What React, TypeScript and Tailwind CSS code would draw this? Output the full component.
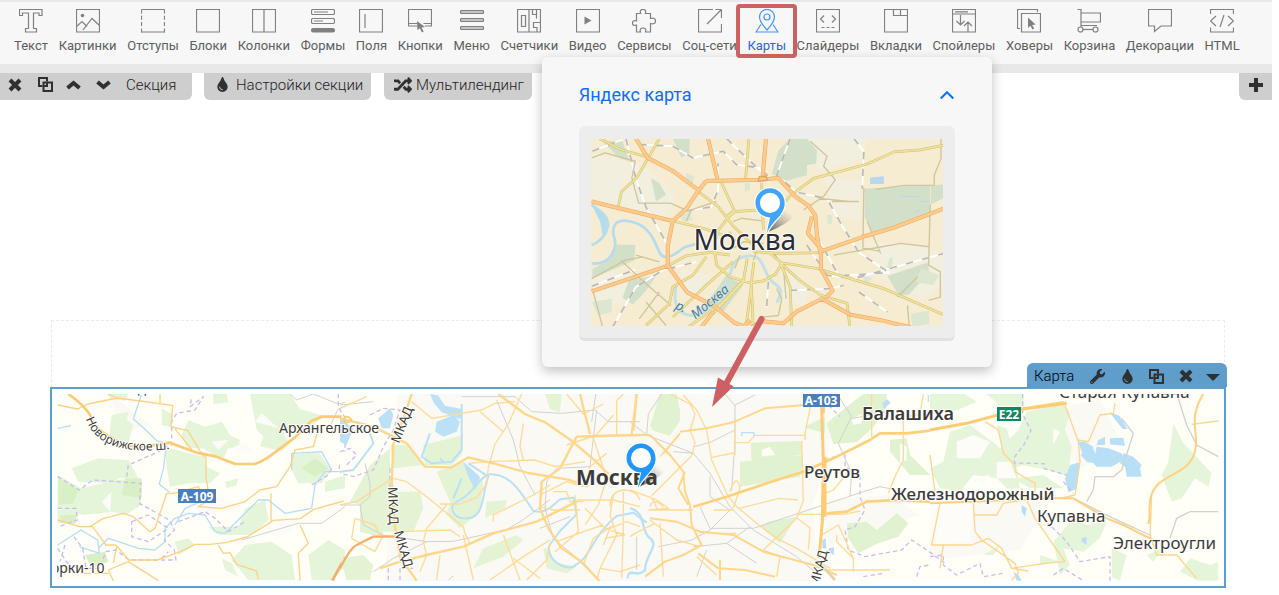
import React from 'react';
import { FaTint, FaRandom, FaWrench } from 'react-icons/fa';

interface Tool {
    label: string;
    icon: React.ReactNode;
}

const dark = { fill: '#808080', stroke: 'none' };

const tools: Tool[] = [
    { label: 'Текст', icon: <path d="M.5.5h22.5v6h-3v-2.5h-5.500v15.500h3v3.500h-11v-3.500h3v-15.500H3.500v2.500h-3z" /> },
    { label: 'Картинки', icon: <><path d="M.5.5h23v22.500H.5z" /><circle cx="6.500" cy="6.500" r="1.800" {...dark} /><path d="M.5 17.500 6 12.500l5 5M7 21l9-11.500 7.500 7" /></> },
    { label: 'Отступы', icon: <><path d="M.5.500h23M.5 23h23" /><path d="M.5.500v23M23.500.500v23" strokeDasharray="4 2.300" /></> },
    { label: 'Блоки', icon: <path d="M.5.5h23v22.500H.5z" /> },
    { label: 'Колонки', icon: <path d="M.5.5h23v22.500H.5zM12 .5v22.500" /> },
    { label: 'Формы', icon: <><rect x=".5" y=".5" width="23" height="5" rx="1.500" /><rect x=".5" y="9.500" width="23" height="5" rx="1.500" /><path d="M3 3h14M3 12h9" /><rect x="0" y="19" width="24" height="4.500" rx="2" {...dark} /></> },
    { label: 'Поля', icon: <path d="M.5.5h23v22.500H.5zM6 5v14" /> },
    { label: 'Кнопки', icon: <><path d="M9 17H.5V.5h23V17H17M.5 14.500H9M15.500 14.500h8" /><path d="m9 12 8 6-3.500.4 2.200 4.200-1.700.9-2.200-4.300-2.400 2z" {...dark} /></> },
    { label: 'Меню', icon: <g fill="#c4c4c4"><rect x=".5" y="1.500" width="23" height="3" rx="1" /><rect x=".5" y="9.500" width="23" height="3" rx="1" /><rect x=".5" y="17.500" width="23" height="3" rx="1" /></g> },
    { label: 'Счетчики', icon: <><path d="M.5.5h23v22.500H.5zM12 .5v22.500M4.500 6.500h4v11h-4z" /><path d="M15.500.5v5h4V.5M19.500 5.500v4M23.500 13.500h-7v5h3.500v4.500" /></> },
    { label: 'Видео', icon: <><path d="M.5.5h23v22.500H.5z" /><path d="M8.500 7.500v8l7-4z" {...dark} /></> },
    { label: 'Сервисы', icon: <path d="M4.500 4.500h4.200C7.500 1.500 9 .5 11 .5s3.500 1 2.300 4h5.200v5c3-1 5 0 5 2.500s-2 3.500-5 2.500V23h-5c1-3-.5-4-2.500-4s-3.500 1-2.500 4h-4v-7c-3 1-4 0-4-2 0-1.500 1-3 4-2z" /> },
    { label: 'Соц-сети', icon: <path d="M15 .5H.5V23h23V15M23.500 9V.500M9 15 23.500.5M17.500.5h6" /> },
    { label: 'Карты', icon: <><path d="M12 21C7.500 16 4.500 12 4.500 8a7.500 7.500 0 0 1 15 0c0 4-3 8-7.500 13z" /><circle cx="12" cy="8" r="3" /><path d="M6 15.500 1 23h22l-5-7.500" /></> },
    { label: 'Слайдеры', icon: <><path d="M.5.5h23v22.500H.5z" /><path d="M8 6.500 4.500 10 8 13.500M16 6.500l3.500 3.500L16 13.500" /><path d="M5.500 18.500h13" strokeDasharray="3 2" /></> },
    { label: 'Вкладки', icon: <path d="M.5.5h23v22.500H.5zM9.500.5v6h14M16.500.5v6" /> },
    { label: 'Спойлеры', icon: <path d="M.5.5h23v22.500H.5zM.5 5h23M3 2.800h13M8.500 6v10M4.500 12l4 4 4-4M16 22.500V13M12 17l4-4 4 4" /> },
    { label: 'Ховеры', icon: <><path d="M3 19.500H.5V.5h20V3M4.500 4.500h19V23h-19z" /><path d="M11 8.500v10.500l2.400-2.200 2 3.700 1.800-.900-2-3.700 3.400-.400z" {...dark} /></> },
    { label: 'Корзина', icon: <><path d="M.5.5H4V18M4 4h19.500v9H4M4 16.500h16" /><path d="M6 20.500h11" /><circle cx="3.500" cy="20.500" r="2.500" fill="#f7f7f7" /><circle cx="18.500" cy="20.500" r="2.500" fill="#f7f7f7" /></> },
    { label: 'Декорации', icon: <path d="M.5.5h23v16.500H13L6.500 22.500V17H.5z" /> },
    { label: 'HTML', icon: <path d="M.5 5V.5h23V5M.5 18.500V23h23v-4.500M6 7l-5.500 5L6 17M18 7l5.500 5-5.500 5M14 6l-4 12" /> },
];

const CloseIcon = () => (
    <svg width="14" height="14" viewBox="0 0 14 14" stroke="#303030" strokeWidth="4" fill="none">
        <path d="m2 2 10 10M12 2 2 12" />
    </svg>
);

const CloneIcon = () => (
    <svg width="15" height="15" viewBox="0 0 15 15" stroke="#303030" strokeWidth="2" fill="none">
        <path d="M4.500 9H1V1h8v3.500" />
        <path d="M5.500 5.500H14V14H5.500z" />
        <path d="M9 5v4H5" />
    </svg>
);

const ChevronIcon = ({ down = false }: { down?: boolean }) => (
    <svg width="15" height="10" viewBox="0 0 15 10" stroke="#303030" strokeWidth="4" fill="none">
        <path d={down ? 'm1.500 2 6 5 6-5' : 'm1.500 8 6-5 6 5'} />
    </svg>
);

const Marker = ({ x, y, color }: { x: number; y: number; color: string }) => (
    <g transform={`translate(${x} ${y})`}>
        <path d="M-2 29 12 8q9-2 13 4Q16 22-2 29z" fill="url(#pinShade)" />
        <path d="M14.500 1C14 13 3 17-3 30-2 22 0 17 .5 12z" fill={color} stroke="#fff" strokeWidth="2" />
        <circle r="15.500" fill="#fff" />
        <circle r="12" fill="#fff" stroke={color} strokeWidth="5" />
        <path d="M14.400 1C14 13 3 17-3 30-2 22 0 17 .5 12z" fill={color} />
        <circle r="10" fill="#fff" />
    </g>
);

const PinShade = () => (
    <defs>
        <linearGradient id="pinShade" x1="0" y1="1" x2="1" y2="0">
            <stop offset="0" stopColor="#222" stopOpacity=".7" />
            <stop offset=".85" stopColor="#555" stopOpacity="0" />
        </linearGradient>
    </defs>
);

const CityMap = () => {
    const main = 'M290 252 325 310 402 350 475 405M158 440 240 460 400 498M158 708 385 632M505 252l28 120M678 252l-10 115M500 378h40l120-3 55-5 50 55 40 28 20 28 5 60 12 60 0 40 35 65-20 20M500 378l-25 32-35 52-40 36-15 75 0 58 58 80 80 40 60 50 35 14M845 588l120-42 95-28 148-57M845 730l-75 38-40 35-65-6-30 18M845 730l85 48 90 16 90 22M815 485l-12 50 42 50M520 770l-35 45M610 815l20-22';
    const minor = 'M182 252l60 32 85 24M360 252l-33 58-35 60-45 40-10 48M627 252l-10 122M1208 272l-70 14-78 6-80 36-90 25-70 18-70 52-55 60M475 410l60 45 45 58 62 60M545 385l40 85-22 20-30 40-10 50 8 50 40 35 60 18 40-6 35-20 18-30M665 385l5 140M400 498l90 22 60 20M385 632l55-30 70-10 60 8M400 785l100-95 80-70M320 810l70-65 10-50 60-35 40-55M520 775l90-95 12-70M640 815l-6-130 8-65M755 815l-5-120-30-75-35-30M720 622l110 18 100 30 100 30 178 78M720 622l60 55 60 42 80 25 8 70M560 485l20-15 80-5M605 680l-60 65-100 70M640 590l80 5 120-2M635 690l-15 110 20 8';
    const rail = 'M160 290l90-35M260 252l30 120 30 85 60 105M300 270l100 5 60 35 90-20 40 40 70 10 30 30M560 252l110 105M750 252l-40 110 60 50 90 20 45 80 50 80 90 60-150 10-60-110M940 252l30 40-5 110M158 693l130-50M220 815l70-120 80-50 100-25M750 705l120-5 40-10M800 570l60 90 80 10 268-75M955 710l85 60M685 680l-5 75M440 468l75-12 20-50 0-80';
    return (
        <svg className="block h-[187px] w-full" viewBox="592 139 350 187" preserveAspectRatio="xMidYMid slice" role="img" aria-label="Карта Москвы">
            <PinShade />
            <rect x="592" y="139" width="350" height="187" fill="#f5ecd2" />
            <g transform="translate(540 55) scale(.33333)" fill="none" strokeLinejoin="round">
                <g fill="#f3efdf">
                    <path d="M158 300l60 10 110 30 80 90-30 60-120-30-100-30zM780 252h200l-20 60-120 40zM975 560l180 10 50 30v90l-60 40-120-60zM158 640l120 20-10 80-110 20zM420 640l90 20-60 90zM850 360l110 20v120l-80-20zM720 640l90 50-20 60-60-10z" />
                </g>
                <g fill="#d3e0c9">
                    <path d="M750 252h50l30 35-2 40-28 5v30l-60 16-45-20 20-70zM972 402l196-12v95l-170 52-25-50zM1170 392l38-3v40l-38 20zM230 568l58 2-2 45-126 55v-28l50-30zM1160 622l5 30-60 65-30 5-35-60zM400 252h50v45l-25 12zM335 370l25 15 20 35-30 20zM270 672l80-10-30 45-40 40-30-20zM190 260l60 0 20 60-30-10zM560 660l50 30-60 80-60-10z" />
                    <path d="M440 355l25 10-5 20-20-5zM615 385l15 0v20l-15 5zM420 480l30-10 10 25-30 5zM158 740l60-10 0 40-40 10zM860 480l15 0v25l-12 5zM1045 610l12-5-3 30-15 5zM965 655l30 15-20 20zM1110 775l55-10 0 40-50 10zM1140 640l55 20-20 30-50-10z" fill="#dce7d1" />
                </g>
                <path d="M158 450c30 20 60 40 45 75-5 20-30 40-45 45M158 625c60 5 80-50 65-85-5-40 20-50 60-38 45 12 60 50 75 85 10 30 40 20 75-10l35-10" stroke="#b4dcec" strokeWidth="8" />
                <path d="M410 690c-10 50 0 85 45 90 60 0 100-70 115-120 10-40 20-55 60-58 45-2 40 60 70 80 25 20 30 20 10 60" stroke="#c4e0e6" strokeWidth="9" />
                <path d="M158 450l40 35 8 40-15 15-8-40z" fill="#b4dcec" />
                <path d="M990 370l38-4 0 20-38 0zM1080 425h52M1120 470l20-3M1137 440h20" fill="#b5d9e8" stroke="#c4d2ee" strokeWidth="3" />
                <path d={rail} stroke="#fff" strokeWidth="5" />
                <path d={rail} stroke="#b9b8b4" strokeWidth="5" strokeDasharray="22 28" />
                <g stroke="#cfc69c" strokeWidth="4">
                    <path d="M158 310l40-15 90 25-10 50 20 75 95 0 45 20M810 260l50 45-10 30 35 40-35 50-60 40M1200 252v60l-20 50v30h-90l-85 12M970 400l-3 180 50 8M1168 450l-5 180M955 440l-80 0M158 670l100-55 55-10M245 615l80 75 70 60M320 740l60 70M300 790l60-80M160 700l30 112M880 600l200-35 85 10M1163 630l35 20v75l-35 10M1070 725l60-60M835 430l90 10M980 500l40 95M440 500l15-35 75-25M1000 580l80-15M360 620l-70-20M580 500l25-10 60 8M700 590l30 50 8 90M710 700l15 30-10 50-45 5M1100 750l5 60" />
                </g>
                <path d={minor} stroke="#cdbd7c" strokeWidth="8" />
                <path d={minor} stroke="#f2e294" strokeWidth="5" />
                <path d={main} stroke="#e6a862" strokeWidth="12" />
                <path d={main} stroke="#ffc98a" strokeWidth="9" />
                <path d="M580 580l30-20 60 5M590 560l-20-30M650 590l-10 25M600 600l-15 40" stroke="#d9c67a" strokeWidth="4" />
                <path d="M655 380l3-14 20-2 5 12z" stroke="#e6a55c" strokeWidth="4" />
            </g>
            <g fontFamily="'Noto Sans', sans-serif" paintOrder="stroke" strokeLinejoin="round">
                <text x="694" y="250" fontSize="28" fill="#2a2c36" stroke="#fff" strokeWidth="2">Москва</text>
                <g fontSize="13" fontStyle="italic" fill="#4a7d9c" stroke="#dbe8e4" strokeWidth="1">
                    <text transform="translate(675 308) rotate(25)">р.</text>
                    <text transform="translate(696 319) rotate(-40)">Москва</text>
                </g>
            </g>
            <Marker x={770} y={203} color="#3fa4fb" />
        </svg>
    );
};

const RegionMap = () => (
    <svg className="block h-[187px] w-full" viewBox="57 394 1162 187" preserveAspectRatio="xMidYMid slice" role="img" aria-label="Карта Москвы и области">
        <PinShade />
        <rect x="57" y="394" width="1162" height="187" fill="#fffff8" />
        <path d="M398 394h420l15 40-20 70 5 77H385l6-100zM110 394l40 30-30 10zM820 500l70-5 30 20-90 30zM930 500l120 0-30 50-90 10zM1040 410l60-10 20 40-40 30z" fill="#fbf9f4" />

        {/* west */}
        <g transform="translate(45 315) scale(.33333)" fill="none" strokeLinejoin="round">
            <g fill="#e5f5da">
                <path d="M505 237h40l5 25-45 5zM615 237h120l30 45 75 22-35 25-90 30 20 25-25 25-65-15 10-30-20-20zM200 300l50-10-5 25 20 15-20 75-50-20 0-40zM430 315l50 20 50-15 25 40 30 15-5 25-30 0-15 30-30-10-30-20-50 0-15-40zM350 280l35 20-10 35-25-5zM360 395l70 20 50 10 5 30 40 20-30 30-60 0-60 10-10-60zM160 430l90 5 30 55-60 0-15 15-105-5-20-40zM38 480l70 40 110-25 70-5 0 80-45 30-40-10-90 10-75-20zM38 585l60-5-5 45-55 0zM740 420l80-10 40 55-30 40-70 0-20-40zM600 580l60-25 10 60-50 45-100 0-30-25 90 0zM600 690l80-10 60 40 10 75h-140l-50-60zM790 720l60-45 50 30v50l-40 40h-60zM840 500l60-20v40l-60 10zM540 500l40-10-5 20-30 10zM390 680l40-10 20 20-50 30zM190 237h60l-10 20-45-5zM530 730l30 15 20 40-40-20z" />
            </g>
            <path d="M40 490l60 35-15 40-45 5zM240 490l50 0 0 60-60-10zM770 460l40-30 40 30-40 25zM120 720l60-10 10 30-50 20zM45 600l50 0-5 25-40 0z" fill="#d9efc6" />
            <path d="M500 380l50-5-30 30zM170 560l30-30-5 60zM560 400l40-20 30 30-50 0zM660 640l50-30 40 30-30 20zM215 660l-60-30 0 40zM700 340l-70-20 20-25zM420 560l100-15 60 25-30 20-80 5z" fill="#fcfbf7" />
            <path d="M290 237l-25 75 40 35 30 30 30 10-10 75-12 45 30 25M38 340l40-8M900 470l-60 0-30 40-10 70-80 15-50-40-30 0-60 60-40 40-30-5-30-50-50-5-40 15-30 30v40l-30 25-50-5-60-20-30-10-30 30M38 690l70-45 50 30 5 40-60-20M740 465l0-50 90-5 30 55M390 630l30-50 60-25" stroke="#b5dff5" strokeWidth="4" />
            <path d="M38 485l65 40 40-30 145 10-5 60 90 50 15 30-30 30 30 30 5 30-140 0-40-30-30 5-20 50-40 0-10-60-30-40M38 580h55l5 35-55 20M245 485l5-35 80-35 50-25v-70l15-25 55-10 25-40-40 30 5-30M260 620l50-20 60 40-60 40-50-15zM800 510l50-30 10-20M880 237v40l20 30v100l-20 60M38 700l40 60M60 690l-15 50M400 620l80-30 30 20 40 40 50-30M350 730l20-20" stroke="#c9bdf0" strokeWidth="4" strokeDasharray="13 9" />
            <path d="M735 237l20 18 50-18M805 237l75 30 20-5M590 675l170-50h70l70-50M880 280l-25 55" stroke="#d3d3d3" strokeWidth="3" />
            <g stroke="#ffd184" strokeWidth="4">
                <path d="M38 270l60 12 30-15 90-18 165 22-5 65 50 10 45 75 10 5 0 60 8 50-15 10M345 237v30M218 249l-30-12M38 615l65 20h40l40 55h30l38 45h85l70-25 45-22h45l50-6 60-16 80-50 80-5 40-28 90-25M135 635l40-25 60-15 30 10 50 45 15-10 35-105h20l75-20 25 45-25 15 70 5 70-20 45-35 50-10 40-60 15-50 55-10 15-55M215 695l-10 50M520 690l15 25 20-2 20 35 60 20 5 27M190 765l15 32M190 765l60-25 90 57M765 630l25 55-30 30 5 82M678 535v90M105 775h85M385 335l60 75" />
            </g>
            <path d="M70 237q70 50 75 90 60 60 140 70l90-14 80 30 60 12 55 22h60q30-10 60-35l60-45 50-50 30-12h60" stroke="#ffcb72" strokeWidth="8" />
            <path d="M862 797l38-70" stroke="#f8ac68" strokeWidth="8" />
        </g>

        {/* centre */}
        <g transform="translate(340 385) scale(.33333)" fill="none" strokeLinejoin="round">
            <g fill="#e3f3d4">
                <path d="M150 180l50 0 50 60-90 10zM90 240l60-50v90l20 40 70 0 10 50-30 70-90 0 0 20-70-20 0-80-30-10zM250 180l120-30-5 60-30 30-80 0zM290 260l80-30 60 60-10 90-60 50-40-40 10-40zM440 350l60-5-5 25-60 30zM0 520l70-10 30 30-10 45h-70zM615 27l50 0-5 55-30-10zM400 550l30-60 100-40 20 15-60 50zM610 490l20 0 10 40 70 15-30 20-60-15z" />
            </g>
            <path d="M20 200l40-50 50 0 20 30-60 70-30 20-40-10v-60z" fill="#fffff8" />
            <path d="M270 27l25 5 20 30 50 10v20l-5 10-55-20-25-30zM290 110l50-20 20 20-10 30-40 15-25-15zM370 230l50 45-15 40-20-40zM115 100l35-30 10 20-10 40-25 0zM0 100l40 30-20 50-20-10z" fill="#bce1f7" />
            <path d="M270 145l-25 70 30 20 60-5 30-35V57M385 235l60 40c-20 50-10 120-60 125-50 5-60-40-35-50 50-20 70-80 100-82 60-2 90 50 130 110 40 10 60-20 80-35l40-5 10 50-50 50-30 40c-20 40 50 90 80 60 40-20 50-90 120-145l50-10 40 30M0 260l40-5 60-80-10-30M340 340l25-60M300 220l10 10M862 580l5-15 30 0" stroke="#b9e1f5" strokeWidth="6" />
            <path d="M90 90l40-20 50 5-20 60-30 50-30 70-60 20-40-10M150 250v60M0 200l30-10 20 20-30 30M145 585v-35M180 585v-35h40" stroke="#cbbfef" strokeWidth="4" strokeDasharray="13 9" />
            <path d="M0 60l100-10M365 35h160l50 45 90 5 100-10 40 35h95M470 45l50 120 20 80 45 85M770 75l-20 170-100 5-30 40-5 80 25 90 60 50 60 60M75 235l15 60 0 40-30 25 10 60 60 30 130 20 80-1 160-35 50-30 80-60M0 360h60M100 560l60-40 100-50M600 430l90-35M325 585l15-12M755 110l15-100" stroke="#d1d1d1" strokeWidth="3" />
            <g stroke="#ffda96" strokeWidth="4">
                <path d="M215 50l60 50 150-25 40-20 60-5M0 70l80-35M420 80l70 60M545 27l-40 90-40 60-20 70-5 50-30 40-50 20-60 0M550 115l-10 70 10 40M385 235l60-5 140-5 60 20 90-15M180 440l150-5 30 20M370 450l30 135M320 360l-60 70-10 40 10 40-20 50M45 400l-10 60 70 40 20-40-20-40zM300 510l-10 75M0 360l50-10 60-40 50-30 40 10 60 45 110 90 5 20 15 30M460 410v-20l120-60 50-30M490 450l50 135M450 585l100-70 80-50M640 320l40 0 10 30 40 0M600 330l80-40 50 15 20-60 50-40M710 345h110l80 20M680 180l90-30M820 90l-60 70 20 60 20 60-25 80-40 60M720 375l-80 0-40-10M735 370l60 60 60 20M705 330l10 110-70 60M820 330l-10 60 20 60-50 100-10 35M790 480l20-50 50-20 40 15M850 320v110l-5 150M850 27l-20 20v105M680 27l50 60 60-30M650 470l80-30 60-20M520 520l80 60" />
                <path d="M810 365q0-45 40-50 40 0 50 30M850 450l-55 10M730 540l30-80 60-40M780 550l60 10 60-20M560 585l60-60 10-50" />
            </g>
            <g stroke="#ffd68a" strokeWidth="7">
                <path d="M215 27l-20 60-35 90-5 120 10 130 15 90 50 70M0 100l100 25 100 50 55 70 80 2 50-30 90 22 90 25 120 20 60 20M475 27l80 60 60 25 80 55 70 60 40 40M660 250l50-95 60-2 130-3M660 250l-55 40-5 80 25 60 40 60 60 40 55 60M720 27l30 120M890 27l-10 110M120 550l60-20 80-20 110-25 90-40 130-35 60-30 60-30" />
            </g>
            <path d="M0 550q30-60 50-70l50-25h70" stroke="#f8ae6c" strokeWidth="7" />
            <path d="M10 105q10-20 25 0-15 15-25 0" stroke="#ffcb72" strokeWidth="5" />
        </g>

        {/* east of the centre */}
        <g transform="translate(630 310) scale(.33333)" fill="none" strokeLinejoin="round">
            <g fill="#e0f2cf">
                <path d="M90 252h50l10 50 0 30-30 45-50-15-10-15zM362 398l153-5 0 40-80 15 0 20-70-5zM330 455l190-20-10 65-180 30zM500 620l-50 80-60-50 25-15zM525 350l60-30 0 50-55-15zM590 340l60-50 50-38h70v40l-40 60-50 45-70 5zM780 390l50-5 10 50 60 60h-60l-60-70zM650 640l60-5 30 25 60-50 35 30-30 40-60 20-60 30-30-45zM880 310l20-10v30z" />
            </g>
            <path d="M395 420l25-10 15 25-40 5zM460 500l20 10-30 10zM665 330l30-20 0 30-25 5zM810 400l20 10v40l-20 10z" fill="#fdfdf8" />
            <path d="M757 280l15-12 10 10-20 18zM577 690l10-5 2 30-12 0zM597 715l15-3 0 22-18-5z" fill="#b9dff5" />
            <path d="M335 378v-10h37v10M895 255v20" stroke="#b9dff5" strokeWidth="4" />
            <path d="M0 595c50 10 30 70 60 90 30 20-15 50-15 95-15 20-35 5-45 8" stroke="#b9e1f5" strokeWidth="7" />
            <path d="M620 270l-20 20 30 30M585 450l60-20 0 40 45 30 0 60 15 40-30 50-30 10 10 60 50 20 110-20 30-30 60 40 40 30M700 800l60-10M860 800l10-30 30-5" stroke="#cbbfef" strokeWidth="4" strokeDasharray="13 9" />
            <path d="M95 252l-40 60-5 60M0 335l50 40 140 55 50 60 60 100 70 70 130 80 60 50M285 252l30 35 0 105-10 150M315 285l60-30M195 410l50-15 70-35M130 425l60 5M240 500l0 60 60 40-60 60-55 30-100 20M210 590l30 65 130 0 330-110 50-15 50 10M190 710l100-10 90 60M290 700l70-50M620 250l45 70-40 80 40 90-5 70M670 325l100-20M20 680l0 100M200 800l30-80" stroke="#d1d1d1" strokeWidth="3" />
            <g stroke="#ffda96" strokeWidth="4">
                <path d="M120 252l60 30 15 30-15 50 15 35-10 40M160 255l40 45 30 60 15 90 50 110 25 30 60 50 60 45 60 30 100 60M540 275v20l-15 75 0 20M310 398h45l20-22h150M315 325l0 110M245 442l65-13M515 393l5 180-20 50 40 30-5 65M328 595l120-30 55 5M500 613h140l50-10M585 550l25-10 50-60M725 252l0 130M820 320l0 130-25 50-20 50M575 675l50-30 45 100v40M450 740l-10 60M150 370l-60 70M0 540l80 30 35 25-60 5M60 600l130 0M90 640l10 160M185 437l-120 120M60 630l80 60 70 20M75 640l-60 30-15 10M450 740l-50-20 100-95M250 600l60 0M300 545q20-60 30-10l-20 60M200 740l60 55M580 780h140l60 0M620 675l0 20 50 50M880 252l-10 60-50 10M60 560q20 20 20 40M100 590q-30-30-40 0M260 670l60 0" />
            </g>
            <path d="M20 252l-15 120M0 375h60l60 60 40 50 5 60 15 40 5 60 30 60-55 30-55 20-60 45M60 625l80 10 70 30 100 10 90 50 150 40 70 30M205 730l60 45 80 5 90 20M165 485l-20 50 30 50M150 365l80-10 85-20 90-40 120-10M100 430l50-60M270 750v60" stroke="#ffd68a" strokeWidth="6" />
            <path d="M190 590l100-30 120-40 110-35 90-40 110-55 30-20h80l70-8M590 610l60-5 60-30 90-5 100 5" stroke="#ffd07c" strokeWidth="8" />
            <path d="M575 290l5 165-3 180-10 110M580 260v50M585 440v180" stroke="#ffcb72" strokeWidth="9" />
            <path d="M570 760l45 50" stroke="#e3d5ac" strokeWidth="8" />
        </g>

        {/* east */}
        <g transform="translate(930 355) scale(.33333)" fill="none" strokeLinejoin="round">
            <g fill="#e5f5da">
                <path d="M0 115h100l40 25-70 30-70 5zM170 117h110v35h-70zM290 170l110-25 20 30-15 50 20 50-10 90-60-20-80-15-30 15-40-60 60-60zM200 210l30 10 15 50-30 10zM60 230l60-20 80 60 60 60 10 70-40 0-30-30-70-10-40 50-60-10-30-60 40-20zM730 205l30 60 30 30 55 60-10 40-40-25-40 60-30 10-30-80 20-40zM370 560l60-70 40 20 60-10-20 50-50 40-60-10 20 50-30 30zM250 370l90-10 60 40-100 0zM750 650l30-40 60 20 25-10v57h-60zM545 580l45 20-20 77-25-10zM330 600l60 20-60 10zM160 600l50-30-20 30zM650 600l50-20-30 40z" />
            </g>
            <path d="M80 260l50-20 50 20-30 50-70 0zM200 320l40 0 20 50-60 0zM370 220l20 10-20 40zM0 440h130l-10 120-120 10zM120 370l60-10-20 40z" fill="#fdfcf8" />
            <g fill="#b9dff6">
                <path d="M445 260l20 0 25 15-15 30-20-15zM500 275l35 5 40 15 5 20-35 20-45 0-10-10zM455 295l35-15 8 25v20l-25-3-20-20zM505 255l20-10v25h-25zM540 250l40-2 5 25-45-5zM580 295l30 10 25 25-5 10 5 25-45 0-5-30-15-10zM420 330l30-8-10 80-25 10-10-40zM538 172l30 10 25 40-15 0zM275 450l15 10-5 25-10-15zM455 550l15-5 0 25-15-10zM250 650l15 10 10 17-15 0z" />
            </g>
            <path d="M278 117v60l25 50-20 40-30 40 0 17 90 2 0 15 70 20M400 380l30 35M0 605l40-5 0 30 40 30 70-35 10 40 60-10M350 500l60 60 40 60 90-15 0 72M370 660l30-20 60 37" stroke="#cbbfef" strokeWidth="4" strokeDasharray="13 9" />
            <path d="M575 190l35 45-35 110-25 20-55 0-5 40-20 35M430 430l120 60 110 50M745 130l25 80 30 60 65 35M720 550l20-60 40-20h85" stroke="#d1d1d1" strokeWidth="4" />
            <g stroke="#ffd58e" strokeWidth="4">
                <path d="M165 200l40 25 15 70 35 35 0 20 60 35 0 30M0 300l15 110M270 160l130-20M405 150l40 110 5 60-15 100-45 10M445 255l30 5 35-80 40-5 5-30M665 425l-5 115 20 60 60 0 60 70M785 208l80-10M130 440l5 90 20 25 100 70 10 30-20 20M130 480h70l20-35 60-10M30 445l-25 125 120 0 50-20 40 30 30 60 100-15 60-5-90-130-40-90M40 570l-10 70M245 640l50 8" />
            </g>
            <path d="M820 117c-50 80-10 120-25 170-10 60-80 70-110 100-40 40-20 90-30 120M0 445l380-15h50l100 60 50 20 100 50" stroke="#ffd083" strokeWidth="6" />
            <path d="M0 225l110-20 150-40 150-20" stroke="#ffcb72" strokeWidth="9" />
        </g>

        <g fontFamily="'Noto Sans', sans-serif" paintOrder="stroke" stroke="#fffef9" strokeWidth="2" strokeLinejoin="round" fill="#3c3c3c">
            <path id="roadPath" d="M86 419C92 436 108 456 170 449" fill="none" stroke="none" />
            <text fontSize="12"><textPath href="#roadPath">Новорижское ш.</textPath></text>
            <text x="279" y="433" fontSize="14">Архангельское</text>
            <text x="51" y="573" fontSize="14">орки-10</text>
            <text x="138" y="394" fontSize="13">д</text>
            <text fontSize="13" transform="translate(399 444) rotate(-68)">МКАД</text>
            <text fontSize="13" transform="translate(388 487) rotate(88)">МКАД</text>
            <text fontSize="13" transform="translate(394 532) rotate(74)">МКАД</text>
            <text fontSize="13" transform="translate(818 588) rotate(-75)">МКАД</text>
            <text x="576" y="485" fontSize="21" fontWeight="700">Москва</text>
            <text x="862" y="420" fontSize="18" fontWeight="600">Балашиха</text>
            <text x="804" y="478" fontSize="17" fontWeight="500">Реутов</text>
            <text x="891" y="500" fontSize="17" fontWeight="500">Железнодорожный</text>
            <text x="1037" y="522" fontSize="17">Купавна</text>
            <text x="1113" y="549" fontSize="17">Электроугли</text>
            <text x="1059" y="398" fontSize="17">Старая Купавна</text>
        </g>
        <g fontFamily="'Noto Sans', sans-serif" fontWeight="700" fontSize="12" fill="#fff" textAnchor="middle">
            <rect x="178" y="489" width="38" height="14" fill="#4c7fc0" />
            <text x="197" y="501">A-109</text>
            <rect x="803" y="394" width="37" height="13" fill="#4c7fc0" />
            <text x="821" y="405">A-103</text>
            <rect x="997" y="407" width="24" height="14" fill="#0a8a63" />
            <text x="1009" y="419">E22</text>
        </g>
        <Marker x={641} y={458} color="#1e98ff" />
    </svg>
);

const MapsMenu = () => (
    <div className="absolute top-[55px] left-1/2 h-[310px] w-[450px] -translate-x-1/2 rounded-md bg-[#f7f7f7] px-[37px] pt-7 text-left shadow-[0_4px_12px_rgba(0,0,0,0.25)]">
        <button type="button" className="flex w-full items-center justify-between pr-px text-[18px] leading-5 text-[#0d6efd]">
            Яндекс карта
            <svg width="14" height="9" viewBox="0 0 14 9" fill="none" stroke="#0d6efd" strokeWidth="2">
                <path d="m.7 7.500 6.300-6.300 6.300 6.300" />
            </svg>
        </button>
        <div className="mt-[21px] rounded-md border-b-3 border-[#e1e1e1] bg-[#ededed] p-3 pt-[13px]">
            <CityMap />
        </div>
        {/* hint arrow from the block to the page */}
        <svg className="pointer-events-none absolute top-[256px] left-[165px]" width="62" height="96" viewBox="708 313 62 96">
            <path d="M762.500 319 727 384" stroke="#cd6062" strokeWidth="6" strokeLinecap="round" />
            <path d="m719 377.500 15.600 8.800L713 407z" fill="#cd6062" />
        </svg>
    </div>
);

const App: React.FC = () => {
    return (
        <div className="bg-white pr-[7px] font-['Roboto',sans-serif]">
            <header className="relative z-10 border-b-9 border-[#e8e8e8] bg-[#f7f7f7]">
                <nav className="flex h-16 items-start justify-between border-t-2 border-[#e9e9e9] pt-[7px] pr-8 pl-[14px]">
                    {tools.map((tool) => {
                        const active = tool.label === 'Карты';
                        return (
                            <div key={tool.label} className={active ? 'relative -mt-[7px] pt-[7px]' : ''}>
                                {active && <MapsMenu />}
                                <button type="button" className={`flex flex-col items-center text-[13px] leading-4 whitespace-nowrap ${active ? 'text-[#2468e5]' : 'text-[#5e5e5e]'}`}>
                                    <svg className="mb-[5px] block" width="24" height="24" viewBox="0 0 24 24" fill="none" stroke={active ? '#4695fb' : '#808080'} strokeWidth="1.200">
                                        {tool.icon}
                                    </svg>
                                    {tool.label}
                                </button>
                                {active && <span className="pointer-events-none absolute -inset-x-[11px] top-[2px] h-[54px] rounded-sm border-4 border-[#cd6062]" />}
                            </div>
                        );
                    })}
                </nav>
            </header>

            <main>
                <div className="flex h-[27px] items-stretch text-[15px] leading-6 font-light text-[#222]">
                    <div className="flex w-48 items-center rounded-br-md bg-[#cecece] pb-1 pl-2">
                        <button type="button" aria-label="Удалить" className="w-[30px]"><CloseIcon /></button>
                        <button type="button" aria-label="Копировать" className="w-7"><CloneIcon /></button>
                        <button type="button" aria-label="Вверх" className="w-[30px]"><ChevronIcon /></button>
                        <button type="button" aria-label="Вниз" className="w-[30px]"><ChevronIcon down /></button>
                        Секция
                    </div>
                    <button type="button" className="ml-3 flex w-[167px] items-center gap-[6px] rounded-b-md bg-[#cecece] pb-1 pl-[11px] whitespace-nowrap">
                        <FaTint size={15} color="#303030" />
                        Настройки секции
                    </button>
                    <button type="button" className="ml-[13px] flex w-[148px] items-center gap-1 rounded-b-md bg-[#cecece] pb-1 pl-[10px]">
                        <FaRandom size={18} color="#303030" />
                        Мультилендинг
                    </button>
                    <button type="button" aria-label="Добавить" className="ml-auto flex w-[33px] items-center justify-center rounded-bl-md bg-[#cecece] pb-1 pl-px">
                        <svg width="14" height="14" viewBox="0 0 14 14" stroke="#303030" strokeWidth="4">
                            <path d="M7 0v14M0 7h14" />
                        </svg>
                    </button>
                </div>

                <section className="mt-[220px] mr-[46px] ml-[50px] pb-2">
                    <div className="mx-px flex h-[67px] items-end justify-end border border-b-0 border-dashed border-[#ececec]">
                        <div className="-mr-[3px] flex h-6 w-[200px] items-center rounded-t-md bg-[#5f9ecb] px-[7px] pt-0.5 text-[15px] font-light text-black">
                            <span className="w-14 pt-px">Карта</span>
                            <button type="button" aria-label="Настроить" className="w-[30px]"><FaWrench size={15} color="#303030" /></button>
                            <button type="button" aria-label="Цвет" className="w-[30px]"><FaTint size={15} color="#303030" /></button>
                            <button type="button" aria-label="Копировать" className="w-[30px]"><CloneIcon /></button>
                            <button type="button" aria-label="Удалить" className="w-[27px]"><CloseIcon /></button>
                            <button type="button" aria-label="Ещё" className="pt-0.5">
                                <svg width="14" height="7" viewBox="0 0 14 7"><path d="M0 0h14L7 7z" fill="#303030" /></svg>
                            </button>
                        </div>
                    </div>
                    <div className="border-2 border-[#5f9ecb] p-[5px]">
                        <RegionMap />
                    </div>
                </section>
            </main>
        </div>
    );
};

export default App;
